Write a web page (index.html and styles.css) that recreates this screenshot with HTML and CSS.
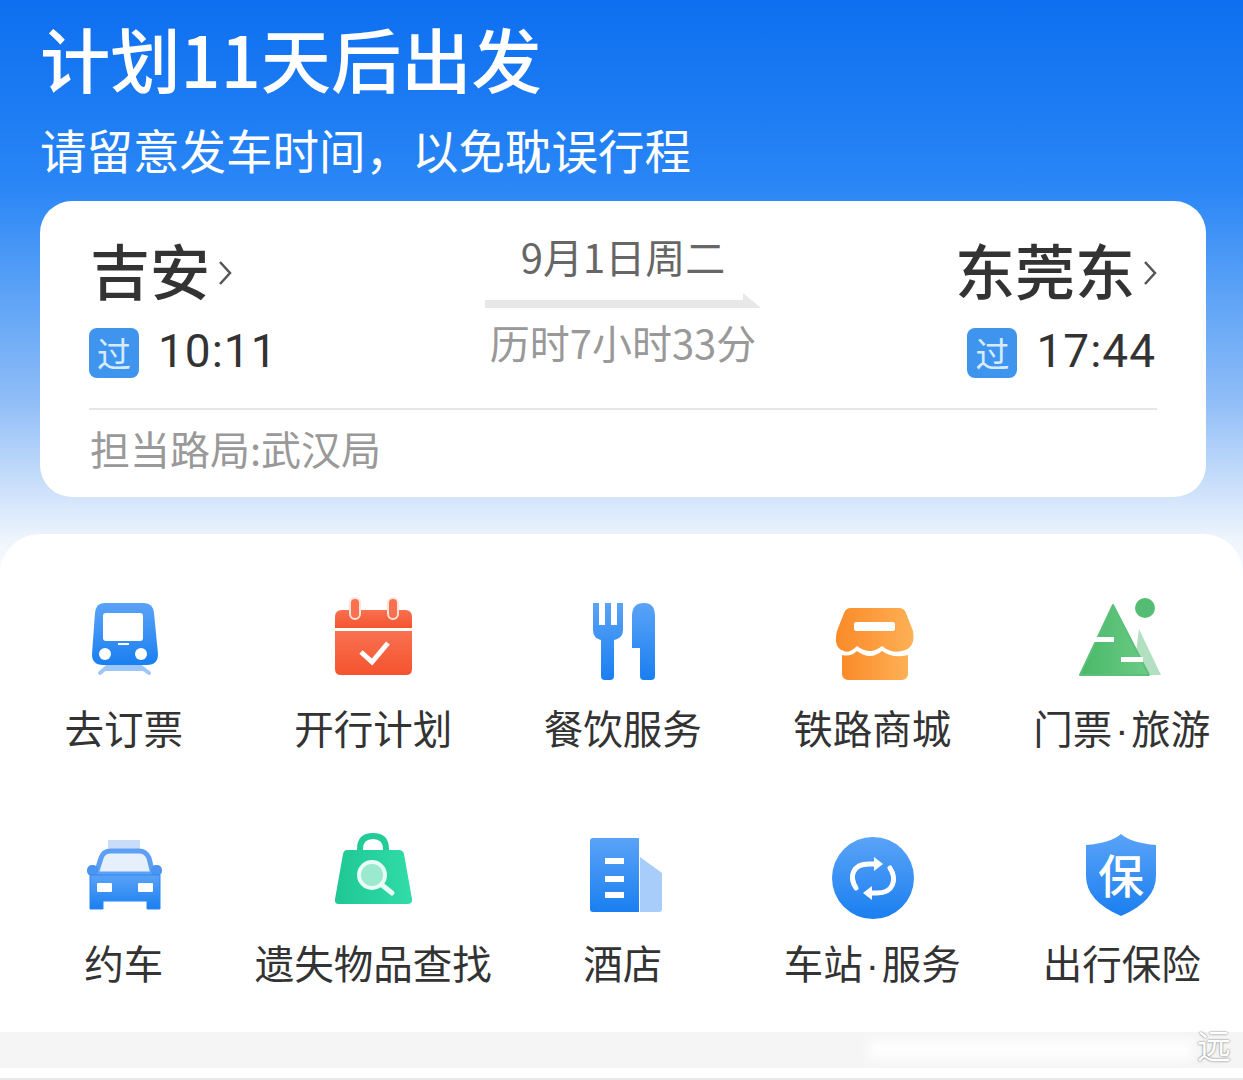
FILE: index.html
```html
<!DOCTYPE html>
<html lang="zh-CN">
<head>
<meta charset="utf-8">
<title>计划11天后出发</title>
<link rel="stylesheet" href="styles.css">
</head>
<body>
<div class="page">
  <header class="hero">
    <h1 class="title">计划11天后出发</h1>
    <p class="subtitle">请留意发车时间，以免耽误行程</p>
    <section class="card">
      <div class="route">
        <div class="stop">
          <div class="city">吉安<svg class="chev" viewBox="0 0 14 26"><path d="M2 2l10 11L2 24"/></svg></div>
          <div class="time-row"><span class="badge">过</span><span class="time">10:11</span></div>
        </div>
        <div class="mid">
          <div class="date">9月1日周二</div>
          <svg class="arrow" viewBox="0 0 276 15"><path d="M0 7H258V0L276 15H0Z"/></svg>
          <div class="duration">历时7小时33分</div>
        </div>
        <div class="stop stop-end">
          <div class="city">东莞东<svg class="chev" viewBox="0 0 14 26"><path d="M2 2l10 11L2 24"/></svg></div>
          <div class="time-row"><span class="badge">过</span><span class="time">17:44</span></div>
        </div>
      </div>
      <div class="bureau">担当路局:武汉局</div>
    </section>
  </header>

  <main class="sheet">
    <div class="grid">
      <div class="item">
        <svg class="icon" viewBox="0 0 90 90">
          <defs>
            <linearGradient id="gb" x1="0" y1="0" x2="0" y2="1"><stop offset="0" stop-color="#5aa3f7"/><stop offset="1" stop-color="#1a7ff0"/></linearGradient>
            <linearGradient id="gr" x1="0" y1="0" x2="0" y2="1"><stop offset="0" stop-color="#f9714f"/><stop offset="1" stop-color="#f5532f"/></linearGradient>
            <linearGradient id="go" x1="0" y1="0" x2="1" y2="0"><stop offset="0" stop-color="#fb8a28"/><stop offset="1" stop-color="#fdb055"/></linearGradient>
            <linearGradient id="gg" x1="0" y1="0" x2="1" y2="0"><stop offset="0" stop-color="#49b868"/><stop offset="1" stop-color="#6ccb85"/></linearGradient>
            <linearGradient id="gt" x1="0" y1="0" x2="1" y2="0"><stop offset="0" stop-color="#1fc793"/><stop offset="1" stop-color="#30dca8"/></linearGradient>
          </defs>
          <path d="M25 7H65Q74 7 75 17L79 58Q79 69 68 69H24Q13 69 13 58L16 17Q17 7 25 7Z" fill="url(#gb)"/>
          <rect x="24" y="17" width="40" height="28" rx="3" fill="#fff"/>
          <rect x="39" y="47" width="11" height="2" fill="#fff"/>
          <circle cx="26" cy="58" r="6" fill="#fff"/><circle cx="62" cy="58" r="6" fill="#fff"/>
          <path d="M21 77L28 71H62L70 77M26 73H64" fill="none" stroke="#9cc7f8" stroke-width="4" stroke-linecap="round"/>
        </svg>
        <span class="label">去订票</span>
      </div>
      <div class="item">
        <svg class="icon" viewBox="0 0 90 90">
          <path d="M7 32V21Q7 14 14 14H77Q84 14 84 21V32Z" fill="url(#gr)"/>
          <path d="M7 35H84V73Q84 79 78 79H13Q7 79 7 73Z" fill="url(#gr)"/>
          <path d="M27 7V18M65 7V18" stroke="#ffe3da" stroke-width="12" stroke-linecap="round"/>
          <path d="M27 7V18M65 7V18" stroke="#f9714f" stroke-width="8" stroke-linecap="round"/>
          <path d="M33 56L44 66L60 47" fill="none" stroke="#fff" stroke-width="5"/>
        </svg>
        <span class="label">开行计划</span>
      </div>
      <div class="item">
        <svg class="icon" viewBox="0 0 90 90">
          <path d="M15 7H21V29H27V7H33V29H39V7H45V34Q45 42 36 44V80a4 4 0 0 1 -4 4H27a4 4 0 0 1 -4 -4V44Q15 42 15 34Z" fill="url(#gb)"/>
          <path d="M54 20Q54 7 66 7Q77 7 77 20V80a4 4 0 0 1 -4 4H66a4 4 0 0 1 -4 -4V52H54Z" fill="url(#gb)"/>
        </svg>
        <span class="label">餐饮服务</span>
      </div>
      <div class="item">
        <svg class="icon" viewBox="0 0 90 90">
          <path d="M24 12H72Q77 12 79 17L86 35Q89 52 75 55Q65 58 55 50Q43 60 30 50Q22 58 17 55Q6 52 10 35L17 17Q19 12 24 12Z" fill="url(#go)"/>
          <rect x="27" y="26" width="41" height="9" rx="2" fill="#fff"/>
          <path d="M15 59Q24 61 30 55Q43 65 55 55Q66 63 81 59V78a6 6 0 0 1 -6 6H21a6 6 0 0 1 -6 -6Z" fill="url(#go)"/>
        </svg>
        <span class="label">铁路商城</span>
      </div>
      <div class="item">
        <svg class="icon" viewBox="0 0 90 90">
          <path d="M62 33L84 79H56Z" fill="#b4e0c2"/>
          <path d="M36 9L72 79H3Z" fill="url(#gg)" stroke="#5cc079" stroke-width="2" stroke-linejoin="round"/>
          <rect x="15" y="41" width="22" height="5" fill="#fff"/>
          <rect x="44" y="61" width="22" height="5" fill="#fff"/>
          <circle cx="68" cy="12" r="10" fill="#55bd73"/>
        </svg>
        <span class="label">门票<span class="dot">·</span>旅游</span>
      </div>
      <div class="item">
        <svg class="icon" viewBox="0 0 90 90">
          <rect x="29" y="9" width="32" height="10" fill="#c9ddfa"/>
          <path d="M17 43L22 27Q24 20 32 20H60Q67 20 70 27L74 43Z" fill="#e6f0fc" stroke="#5d9ff2" stroke-width="5"/>
          <rect x="8" y="34" width="11" height="11" rx="5" fill="#4a94f2"/>
          <rect x="72" y="34" width="11" height="11" rx="5" fill="#4a94f2"/>
          <path d="M11 44H81V78H68V70H24V78H11Z" fill="url(#gb)" stroke="#2f86f2" stroke-width="1"/>
          <rect x="18" y="52" width="15" height="9" rx="1" fill="#fff"/>
          <rect x="59" y="52" width="15" height="9" rx="1" fill="#fff"/>
        </svg>
        <span class="label">约车</span>
      </div>
      <div class="item">
        <svg class="icon" viewBox="0 0 90 90">
          <path d="M32 22V18Q32 5 45 5Q58 5 58 18V22" fill="none" stroke="#22cb97" stroke-width="6"/>
          <path d="M19 19H71Q75 19 76 23L84 68Q85 73 79 73H11Q6 73 7 68L15 23Q16 19 19 19Z" fill="url(#gt)"/>
          <circle cx="44" cy="44" r="13" fill="#9be9cf" stroke="#e8fbf5" stroke-width="4"/>
          <path d="M54 54L64 62" stroke="#e8fbf5" stroke-width="5" stroke-linecap="round"/>
        </svg>
        <span class="label">遗失物品查找</span>
      </div>
      <div class="item">
        <svg class="icon" viewBox="0 0 90 90">
          <path d="M62 26L84 42V78Q84 81 81 81H62Z" fill="#a8cdfb"/>
          <path d="M15 7H61V81H15Q12 81 12 78V10Q12 7 15 7Z" fill="url(#gb)"/>
          <rect x="27" y="27" width="19" height="6" fill="#fff"/>
          <rect x="27" y="45" width="19" height="6" fill="#fff"/>
          <rect x="27" y="61" width="19" height="6" fill="#fff"/>
        </svg>
        <span class="label">酒店</span>
      </div>
      <div class="item">
        <svg class="icon" viewBox="0 0 90 90">
          <circle cx="46" cy="47" r="41" fill="url(#gb)"/>
          <path d="M29 57C22 46 25 33 42 33H49" fill="none" stroke="#fff" stroke-width="5" stroke-linecap="round"/>
          <path d="M47 26L56 33L47 40Z" fill="#fff"/>
          <path d="M63 37C70 48 67 62 50 62H43" fill="none" stroke="#fff" stroke-width="5" stroke-linecap="round"/>
          <path d="M45 55L36 62L45 69Z" fill="#fff"/>
        </svg>
        <span class="label">车站<span class="dot">·</span>服务</span>
      </div>
      <div class="item">
        <svg class="icon" viewBox="0 0 90 90">
          <path d="M44 3Q54 12 79 14V45Q79 70 44 85Q9 70 9 45V14Q34 12 44 3Z" fill="url(#gb)"/>
          <text class="shield-text" x="44" y="62">保</text>
        </svg>
        <span class="label">出行保险</span>
      </div>
    </div>
  </main>

  <footer class="footer">
    <div class="strip"></div>
    <div class="smear"></div>
    <span class="mark">远</span>
  </footer>
</div>
</body>
</html>
```

FILE: styles.css
```css
* { box-sizing: border-box; }
html, body { margin: 0; padding: 0; }
body {
  font-family: "Noto Sans CJK SC", "Liberation Sans", sans-serif;
  background: #fff;
}
.page {
  width: 1243px;
  height: 1080px;
  overflow: hidden;
  display: flex;
  flex-direction: column;
  background: linear-gradient(180deg, #0e6ff0 0, #1d7cf3 110px, #2b87f6 190px, #5fa4f6 300px, #8fbdf7 400px, #d4e5fb 500px, #eef5fd 540px, #fff 590px);
}
.hero {
  height: 534px;
  flex: none;
  padding: 15px 37px 0 40px;
  color: #fff;
}
.title {
  margin: 0;
  font-size: 70.3px;
  line-height: 84px;
  font-weight: 500;
}
.subtitle {
  margin: 21px 0 0;
  font-size: 46.5px;
  line-height: 58px;
  font-weight: 400;
}
.card {
  margin-top: 23px;
  height: 296px;
  background: #fff;
  border-radius: 32px;
  padding: 29px 49px 0 49px;
  color: #333;
}
.route {
  display: grid;
  grid-template-columns: 1fr 276px 1fr;
  height: 180px;
  border-bottom: 2px solid #e6e6e6;
}
.stop { display: flex; flex-direction: column; align-items: flex-start; }
.stop-end { align-items: flex-end; }
.city {
  display: flex;
  align-items: center;
  font-size: 60px;
  line-height: 78px;
  font-weight: 500;
  color: #333;
  margin-left: 1px;
}
.chev {
  width: 14px;
  height: 26px;
  margin: 7px 0 0 8px;
  fill: none;
  stroke: #555;
  stroke-width: 2.5;
}
.time-row {
  display: flex;
  align-items: center;
  gap: 19px;
  margin-top: 20px;
}
.badge {
  width: 50px;
  height: 50px;
  border-radius: 8px;
  background: #3f95ee;
  color: #d6ebff;
  font-size: 34px;
  line-height: 50px;
  text-align: center;
}
.time {
  font-family: Roboto, "Liberation Sans", sans-serif;
  font-size: 46px;
  line-height: 50px;
  letter-spacing: 1px;
  color: #333;
  position: relative;
  top: -2px;
  margin-right: 1px;
}
.mid {
  display: flex;
  flex-direction: column;
  align-items: center;
}
.date {
  font-size: 40px;
  line-height: 50px;
  color: #666;
  margin-top: 1px;
}
.arrow {
  width: 276px;
  height: 15px;
  fill: #e8e8e8;
  margin-top: 12px;
  flex: none;
}
.duration {
  font-size: 40px;
  line-height: 50px;
  color: #999;
  margin-top: 9px;
}
.bureau {
  margin-left: 1px;
  margin-top: 13px;
  font-size: 40px;
  line-height: 50px;
  color: #999;
}
.sheet {
  height: 498px;
  flex: none;
  background: #fff;
  border-radius: 40px 40px 0 0;
  padding-top: 62px;
}
.grid {
  display: grid;
  grid-template-columns: repeat(5, 249.5px);
  grid-auto-rows: 156px;
  row-gap: 79px;
  margin-left: -1px;
}
.item {
  display: flex;
  flex-direction: column;
  align-items: center;
  gap: 16px;
}
.icon { width: 90px; height: 90px; flex: none; }
.label {
  height: 50px;
  font-size: 39.5px;
  line-height: 50px;
  color: #333;
  white-space: nowrap;
}
.dot {
  font-family: "Liberation Sans", sans-serif;
  margin: 0 3px;
}
.shield-text {
  font-size: 46px;
  font-weight: 500;
  fill: #fff;
  text-anchor: middle;
}
.footer {
  position: relative;
  flex: 1;
  background: #fff;
  border-bottom: 2px solid #e8e8e8;
}
.strip { height: 36px; background: #f5f5f5; }
.smear {
  position: absolute;
  left: 868px;
  top: 8px;
  width: 325px;
  height: 20px;
  background: #fff;
  opacity: 0.85;
  filter: blur(5px);
}
.mark {
  position: absolute;
  left: 1197px;
  top: -9px;
  font-size: 34px;
  line-height: 44px;
  color: #fff;
  text-shadow: 0 0 2px #555;
}
```
